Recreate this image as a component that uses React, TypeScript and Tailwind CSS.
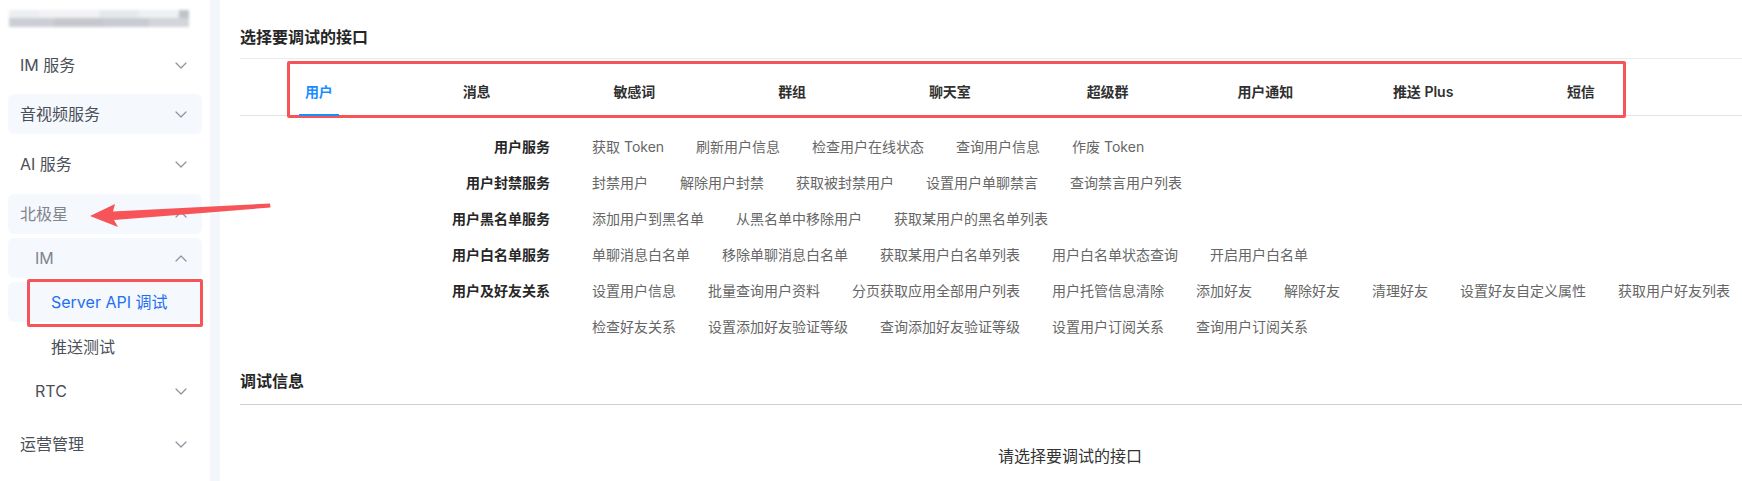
import React from "react";

type MenuItem = {
  label: string;
  depth: 0 | 1 | 2;
  chevron?: "down" | "up";
  tone?: "normal" | "muted" | "active";
  filled?: boolean;
  gap: string;
};

const menu: MenuItem[] = [
  { label: "IM 服务", depth: 0, chevron: "down", gap: "mt-[45px]" },
  { label: "音视频服务", depth: 0, chevron: "down", filled: true, gap: "mt-[9px]" },
  { label: "AI 服务", depth: 0, chevron: "down", gap: "mt-[10px]" },
  { label: "北极星", depth: 0, chevron: "up", tone: "muted", filled: true, gap: "mt-[10px]" },
  { label: "IM", depth: 1, chevron: "up", tone: "muted", filled: true, gap: "mt-1" },
  { label: "Server API 调试", depth: 2, tone: "active", filled: true, gap: "mt-1" },
  { label: "推送测试", depth: 2, gap: "mt-[5px]" },
  { label: "RTC", depth: 1, chevron: "down", gap: "mt-1" },
  { label: "运营管理", depth: 0, chevron: "down", gap: "mt-[13px]" },
];

const tabs = ["用户", "消息", "敏感词", "群组", "聊天室", "超级群", "用户通知", "推送 Plus", "短信"];

const groups = [
  { label: "用户服务", items: ["获取 Token", "刷新用户信息", "检查用户在线状态", "查询用户信息", "作废 Token"] },
  { label: "用户封禁服务", items: ["封禁用户", "解除用户封禁", "获取被封禁用户", "设置用户单聊禁言", "查询禁言用户列表"] },
  { label: "用户黑名单服务", items: ["添加用户到黑名单", "从黑名单中移除用户", "获取某用户的黑名单列表"] },
  {
    label: "用户白名单服务",
    items: ["单聊消息白名单", "移除单聊消息白名单", "获取某用户白名单列表", "用户白名单状态查询", "开启用户白名单"],
  },
  {
    label: "用户及好友关系",
    items: [
      "设置用户信息",
      "批量查询用户资料",
      "分页获取应用全部用户列表",
      "用户托管信息清除",
      "添加好友",
      "解除好友",
      "清理好友",
      "设置好友自定义属性",
      "获取用户好友列表",
      "检查好友关系",
      "设置添加好友验证等级",
      "查询添加好友验证等级",
      "设置用户订阅关系",
      "查询用户订阅关系",
    ],
  },
];

function Chevron({ dir }: { dir: "down" | "up" }) {
  return (
    <svg width="12" height="7" viewBox="0 0 12 7" fill="none" className="shrink-0">
      <path
        d={dir === "down" ? "M1 1l5 5 5-5" : "M1 6l5-5 5 5"}
        stroke="#8c929b"
        strokeWidth="1.2"
        strokeLinecap="round"
        strokeLinejoin="round"
      />
    </svg>
  );
}

function Sidebar() {
  return (
    <aside className="relative flex w-[210px] shrink-0 flex-col bg-white">
      {/* blurred logo */}
      <div className="absolute left-[9px] top-[10px] flex w-[180px] flex-col blur-[1.5px]">
        <div className="flex h-[8px]">
          <div className="w-[30px] bg-[#eceef1]" />
          <div className="w-[60px] bg-[#f1f2f4]" />
          <div className="w-[40px] bg-[#e6e8ec]" />
          <div className="w-[40px] bg-[#eef0f2]" />
          <div className="w-[10px] bg-[#bfc2c8]" />
        </div>
        <div className="flex h-[9px]">
          <div className="w-[45px] bg-[#cbced4]" />
          <div className="w-[50px] bg-[#c4c7cd]" />
          <div className="w-[45px] bg-[#c8cbd1]" />
          <div className="w-[40px] bg-[#d2d5d9]" />
        </div>
      </div>

      {menu.map((m) => (
        <div
          key={m.label}
          className={`${m.gap} mx-2 flex h-10 items-center justify-between rounded-md pr-[15px] text-base ${
            m.filled ? "bg-[#f5f8fd]" : ""
          } ${m.depth === 0 ? "pl-3" : m.depth === 1 ? "pl-[27px]" : "pl-[43px]"} ${
            m.tone === "active" ? "text-[#1f6ff2]" : m.tone === "muted" ? "text-[#80858e]" : "text-[#4b5058]"
          }`}
        >
          <span>{m.label}</span>
          {m.chevron && <Chevron dir={m.chevron} />}
        </div>
      ))}
    </aside>
  );
}

export default function App() {
  return (
    <div className="relative flex h-[481px] w-[1742px] overflow-hidden bg-white font-[Inter,'Noto_Sans_CJK_SC',sans-serif]">
      <Sidebar />
      <div className="w-[10px] shrink-0 bg-[#f3f6fb]" />

      <main className="flex min-w-0 flex-1 flex-col pl-5">
        <h2 className="border-b border-[#ebebeb] pb-[9px] pt-[25px] text-base leading-6 font-semibold text-[#262626]">
          选择要调试的接口
        </h2>

        <div className="flex h-[57px] border-b border-[#e3e3e3]">
          {tabs.map((t, i) => (
            <div key={t} className="flex w-[157.75px] shrink-0 flex-col items-center">
              <span
                className={`pt-[22px] text-sm leading-[22px] font-semibold ${
                  i === 0 ? "text-[#1a8cff]" : "text-[#303030]"
                }`}
              >
                {t}
              </span>
              {i === 0 && <span className="relative z-10 mt-auto -mb-px h-[2px] w-10 bg-[#1890ff]" />}
            </div>
          ))}
        </div>

        <div className="flex flex-col pt-[13px]">
          {groups.map((g) => (
            <div key={g.label} className="flex text-sm leading-9">
              <div className="w-[310px] shrink-0 text-right font-semibold text-[#262626]">{g.label}</div>
              <div className="ml-[42px] flex flex-1 flex-wrap gap-x-8 text-[#666666]">
                {g.items.map((it) => (
                  <span key={it} className="cursor-pointer whitespace-nowrap">
                    {it}
                  </span>
                ))}
              </div>
            </div>
          ))}
        </div>

        <h2 className="mt-6 border-b border-[#cfcfcf] pb-[11px] text-base leading-6 font-semibold text-[#262626]">
          调试信息
        </h2>
        <p className="mt-[39px] pl-[758px] text-base leading-6 text-[#333333]">请选择要调试的接口</p>
      </main>

      {/* annotation marks */}
      <div className="pointer-events-none absolute left-[287px] top-[61px] h-[57px] w-[1339px] rounded-[2px] border-[3px] border-[#f65458]" />
      <div className="pointer-events-none absolute left-[27px] top-[279px] h-[48px] w-[176px] rounded-[2px] border-[3px] border-[#f65458]" />
      <svg className="pointer-events-none absolute left-0 top-0" width="300" height="260" viewBox="0 0 300 260">
        <polygon
          points="90,216 115,204 113,211.5 270,203.5 270.5,207.5 114,220 118,227"
          fill="#f65458"
        />
      </svg>
    </div>
  );
}
